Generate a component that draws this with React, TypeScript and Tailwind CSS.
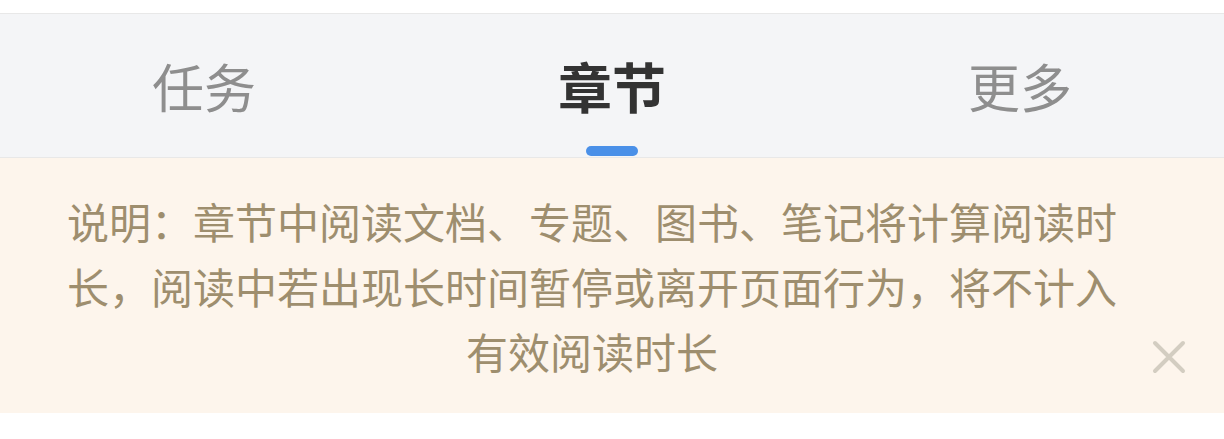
import { useState } from "react";

const tabs = ["任务", "章节", "更多"];

const notice =
  "说明：章节中阅读文档、专题、图书、笔记将计算阅读时长，阅读中若出现长时间暂停或离开页面行为，将不计入有效阅读时长";

function CloseIcon() {
  return (
    <svg width="34" height="34" viewBox="0 0 34 34" fill="none">
      <path
        d="M3 3L31 31M31 3L3 31"
        stroke="#d3cdc1"
        strokeWidth="4"
        strokeLinecap="round"
      />
    </svg>
  );
}

export default function App() {
  const [active, setActive] = useState(1);
  const [showNotice, setShowNotice] = useState(true);

  return (
    <div
      className="w-[1224px] h-[439px] bg-white pt-[13px]"
      style={{ fontFamily: '"Noto Sans CJK SC", "Noto Sans", sans-serif' }}
    >
      {/* tab bar */}
      <div className="grid grid-cols-3 h-[145px] bg-[#f4f5f7] border-t border-b border-[#e8e8e8]">
        {tabs.map((label, i) => (
          <button
            key={label}
            className="flex flex-col items-center pt-[46px]"
            onClick={() => setActive(i)}
          >
            <span
              className={
                i === active
                  ? "text-[54px] leading-[52px] font-bold text-[#333333]"
                  : "text-[52px] leading-[52px] text-[#8e8e8e]"
              }
            >
              {label}
            </span>
            <span
              className={
                i === active
                  ? "mt-[34px] w-[52px] h-[10px] rounded-full bg-[#4a90e8]"
                  : "mt-[34px] w-[52px] h-[10px]"
              }
            />
          </button>
        ))}
      </div>

      {/* reading time notice */}
      {showNotice && (
        <div className="flex items-end bg-[#fdf5ec] pl-[64px] pr-[38px] pt-[30px] pb-[30px]">
          <p className="w-[1056px] text-center text-[42px] leading-[65px] text-[#9e8e6e]">
            {notice}
          </p>
          <button
            className="ml-auto mb-[9px]"
            onClick={() => setShowNotice(false)}
          >
            <CloseIcon />
          </button>
        </div>
      )}
    </div>
  );
}
